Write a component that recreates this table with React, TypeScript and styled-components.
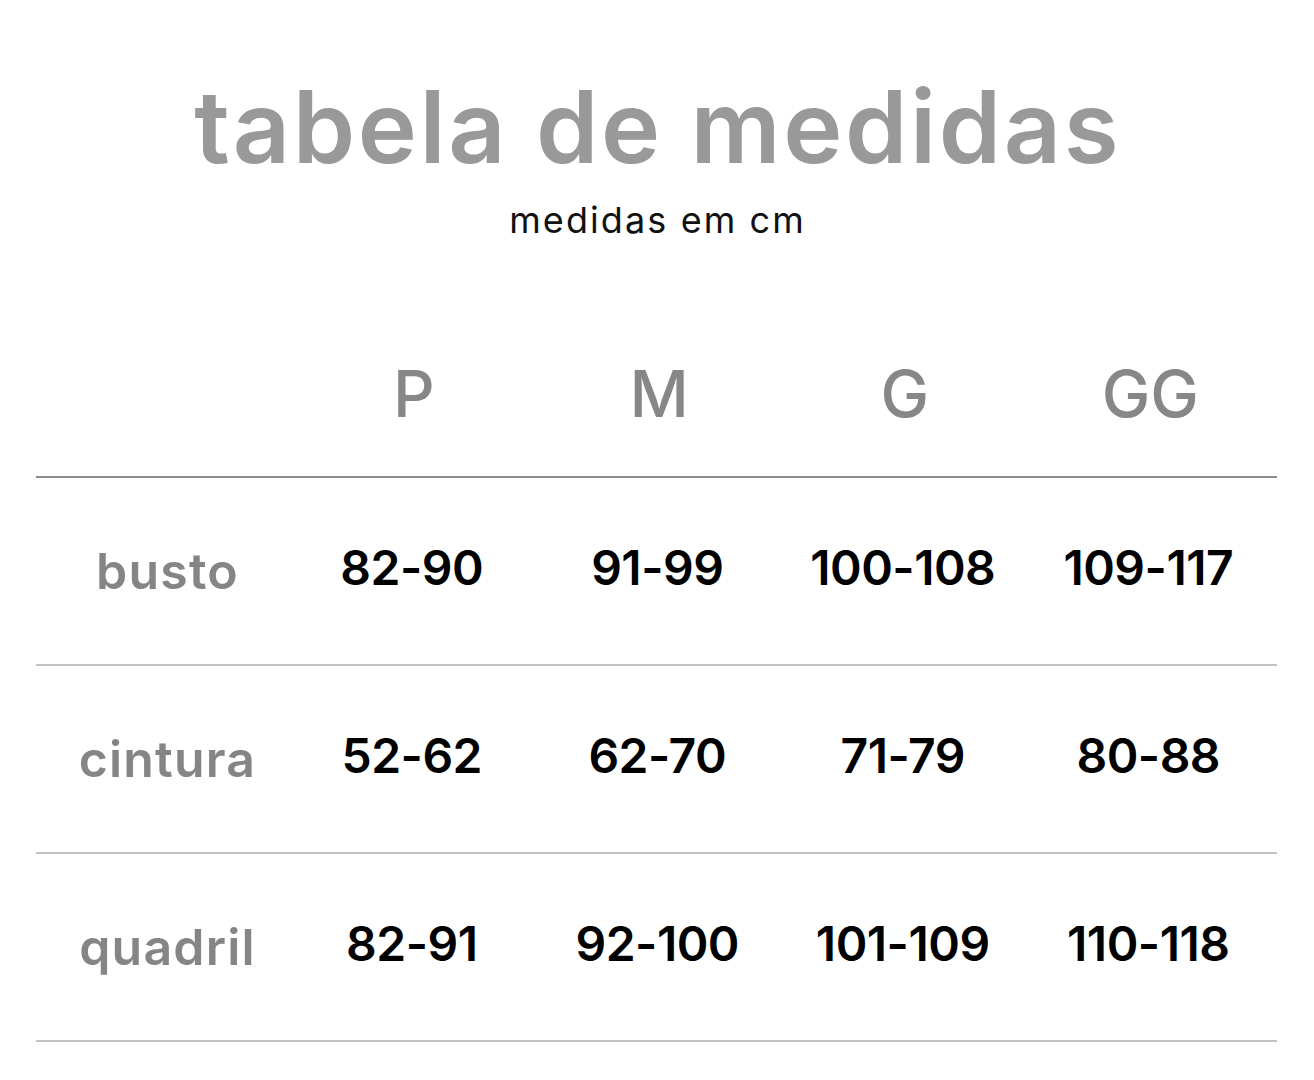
import React from "react";
import styled, { createGlobalStyle } from "styled-components";

const Global = createGlobalStyle`
  html, body { margin: 0; padding: 0; background: #ffffff; }
  body { font-family: Inter, "Open Sans", sans-serif; }
`;

const Page = styled.div`
  width: 1314px;
  padding: 77px 37px 0 36px;
  box-sizing: border-box;
  display: flex;
  flex-direction: column;
  align-items: stretch;
`;

const Title = styled.h1`
  margin: 0;
  font-family: Inter, sans-serif;
  font-weight: 600;
  font-size: 100px;
  line-height: 1;
  color: #999999;
  text-align: center;
  letter-spacing: 2.6px;
  padding-left: 2.6px;
`;

const Subtitle = styled.p`
  margin: 25px 0 0;
  font-family: Inter, sans-serif;
  font-weight: 400;
  font-size: 36px;
  line-height: 1;
  color: #111111;
  text-align: center;
  letter-spacing: 2.1px;
  padding-left: 2.1px;
`;

const Table = styled.div`
  margin-top: 123px;
  display: grid;
  grid-template-columns: 259px repeat(4, 1fr);
`;

const Row = styled.div<{ $head?: boolean }>`
  display: grid;
  grid-column: 1 / -1;
  grid-template-columns: subgrid;
  height: ${(p) => (p.$head ? "115px" : "186px")};
  align-items: ${(p) => (p.$head ? "start" : "center")};
  border-bottom: 2px solid ${(p) => (p.$head ? "#8c8c8c" : "#c2c2c2")};
`;

const Head = styled.div`
  font-family: Inter, sans-serif;
  font-weight: 500;
  font-size: 65px;
  line-height: 1;
  color: #878787;
  text-align: center;
  padding-right: 8px;
`;

const Label = styled.div`
  font-family: Inter, sans-serif;
  font-weight: 600;
  font-size: 50px;
  line-height: 1;
  color: #858585;
  text-align: center;
  letter-spacing: 1.2px;
  padding-left: 4px;
`;

const Value = styled.div`
  font-family: Inter, sans-serif;
  font-weight: 600;
  font-size: 48px;
  line-height: 1;
  color: #000000;
  text-align: center;
  letter-spacing: -0.5px;
  padding-right: 12px;
  padding-bottom: 6px;
`;

const sizes = ["P", "M", "G", "GG"];
const rows: [string, string[]][] = [
  ["busto", ["82-90", "91-99", "100-108", "109-117"]],
  ["cintura", ["52-62", "62-70", "71-79", "80-88"]],
  ["quadril", ["82-91", "92-100", "101-109", "110-118"]],
];

export default function App() {
  return (
    <>
      <Global />
      <Page>
        <Title>tabela de medidas</Title>
        <Subtitle>medidas em cm</Subtitle>
        <Table>
          <Row $head>
            <div />
            {sizes.map((s) => (
              <Head key={s}>{s}</Head>
            ))}
          </Row>
          {rows.map(([label, vals]) => (
            <Row key={label}>
              <Label>{label}</Label>
              {vals.map((v) => (
                <Value key={v}>{v}</Value>
              ))}
            </Row>
          ))}
        </Table>
      </Page>
    </>
  );
}
